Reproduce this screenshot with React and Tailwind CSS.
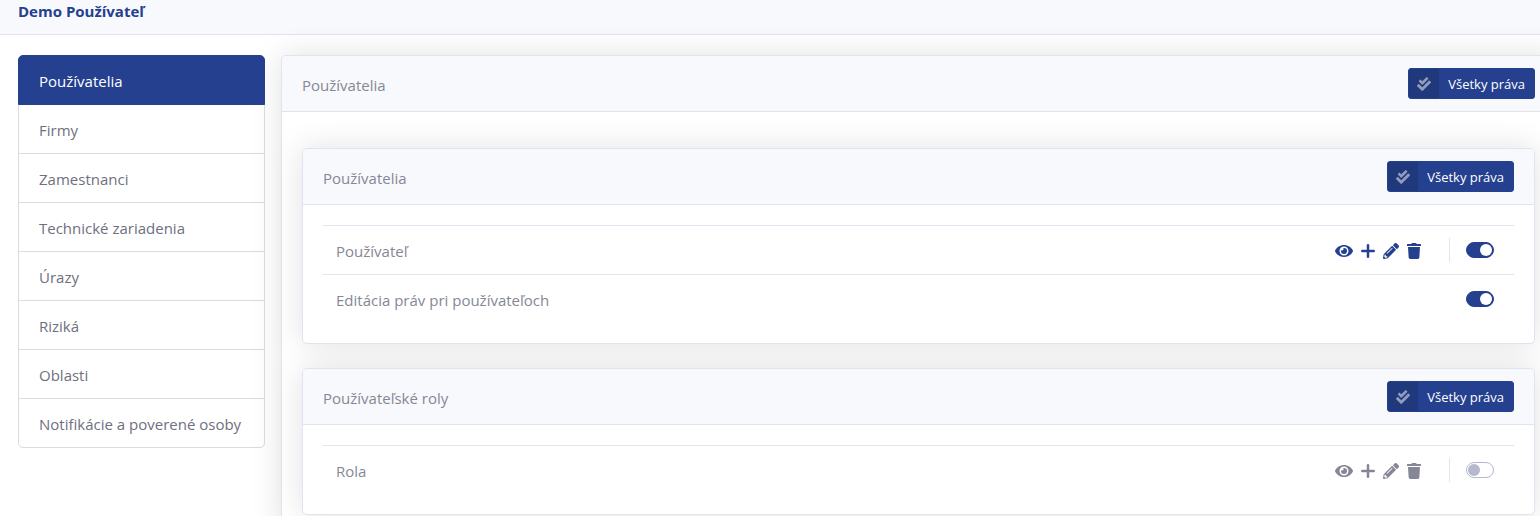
import React, { useState } from 'react'
import { FaCheckDouble, FaEye, FaPencilAlt, FaTrash } from 'react-icons/fa'

const sections = [
    'Používatelia',
    'Firmy',
    'Zamestnanci',
    'Technické zariadenia',
    'Úrazy',
    'Riziká',
    'Oblasti',
    'Notifikácie a poverené osoby',
]

const groups = [
    {
        title: 'Používatelia',
        rights: [
            { name: 'Používateľ', actions: true, enabled: true },
            {
                name: 'Editácia práv pri používateľoch',
                actions: false,
                enabled: true,
            },
        ],
    },
    {
        title: 'Používateľské roly',
        rights: [{ name: 'Rola', actions: true, enabled: false }],
    },
]

function PlusIcon({ className }) {
    return (
        <svg
            viewBox="0 0 14 16"
            className={className}
            fill="none"
            stroke="currentColor"
            strokeWidth="2.5"
            strokeLinecap="round"
        >
            <path d="M7 2.25v11.5M1.25 8h11.5" />
        </svg>
    )
}

const actions = [
    { label: 'Zobraziť', Icon: FaEye, size: 'w-[18px] h-4' },
    { label: 'Pridať', Icon: PlusIcon, size: 'w-[14px] h-4' },
    { label: 'Upraviť', Icon: FaPencilAlt, size: 'w-4 h-4' },
    { label: 'Zmazať', Icon: FaTrash, size: 'w-[14px] h-4' },
]

function AllRightsButton({ onClick }) {
    return (
        <button
            type="button"
            onClick={onClick}
            className="flex items-stretch h-[31px] rounded-[3px] border border-[#24408e] bg-[#24408e] text-[13px] text-white cursor-pointer"
        >
            <span className="flex items-center justify-center w-[30px] bg-[#20387c] text-[#929cbe]">
                <FaCheckDouble className="size-[14px]" />
            </span>
            <span className="self-center px-[9px]">Všetky práva</span>
        </button>
    )
}

function Card({ title, onAllRights, children }) {
    return (
        <section className="rounded-[5px] border border-[#e1e3f0] bg-white shadow-[0_0_32px_rgba(0,0,0,0.12)]">
            <header className="flex items-center justify-between h-14 px-5 rounded-t-[4px] border-b border-[#e1e3f0] bg-[#f8f9fd]">
                <h2 className="pt-0.5">{title}</h2>
                <AllRightsButton onClick={onAllRights} />
            </header>
            {children}
        </section>
    )
}

function RightRow({ right, enabled, onToggle }) {
    return (
        <tr className="h-[49px]">
            <th
                scope="row"
                className="pl-[13px] pt-0.5 border-t border-[#e1e3f0] text-left font-normal"
            >
                {right.name}
            </th>
            <td className="pr-5 border-t border-[#e1e3f0]">
                <div className="flex items-center justify-end">
                    {right.actions && (
                        <div
                            className={`flex items-center gap-2 h-6 pt-0.5 pr-7 mr-4 border-r border-[#e1e3f0] ${enabled ? 'text-[#24408e]' : 'text-[#868796]'}`}
                        >
                            {actions.map(({ label, Icon, size }) => (
                                <button
                                    key={label}
                                    type="button"
                                    aria-label={label}
                                    className="cursor-pointer"
                                >
                                    <Icon className={size} />
                                </button>
                            ))}
                        </div>
                    )}
                    <input
                        type="checkbox"
                        role="switch"
                        aria-label={right.name}
                        checked={enabled}
                        onChange={onToggle}
                        className="flex items-center appearance-none w-7 h-4 px-px rounded-full border border-[#b6b9ce] bg-white cursor-pointer before:size-3 before:rounded-full before:bg-[#b6b9ce] checked:justify-end checked:border-[#24408e] checked:bg-[#24408e] checked:before:bg-white"
                    />
                </div>
            </td>
        </tr>
    )
}

function App() {
    const [active, setActive] = useState(sections[0])
    const [enabled, setEnabled] = useState(() =>
        Object.fromEntries(
            groups.flatMap((g) => g.rights.map((r) => [r.name, r.enabled])),
        ),
    )

    const toggle = (name) => {
        setEnabled({ ...enabled, [name]: !enabled[name] })
    }
    const enableAll = (list) => {
        const next = { ...enabled }
        list.forEach((g) => g.rights.forEach((r) => (next[r.name] = true)))
        setEnabled(next)
    }

    return (
        <div className="h-screen overflow-hidden bg-white font-['Open_Sans',sans-serif] text-[15px] leading-6 text-[#868796]">
            <header className="px-[18px] pb-3 border-b border-[#e1e3f0] bg-[#f8f9fd]">
                <h1 className="font-bold leading-[22px] text-[#24408e]">
                    Demo Používateľ
                </h1>
            </header>
            <div className="flex items-start gap-4 pt-5 pl-[18px]">
                <nav className="shrink-0 min-w-[247px]">
                    {sections.map((name) => (
                        <a
                            key={name}
                            href="#"
                            onClick={() => setActive(name)}
                            className={`flex items-center h-[50px] px-5 pt-0.5 border not-first:-mt-px first:rounded-t-[5px] last:rounded-b-[5px] ${active === name ? 'relative border-[#24408e] bg-[#24408e] text-white' : 'border-[#dcdcdf] bg-white text-[#6e707e]'}`}
                        >
                            {name}
                        </a>
                    ))}
                </nav>
                {/* the panel runs past the right edge of the window */}
                <main className="grow -mr-4">
                    <Card
                        title={active}
                        onAllRights={() => enableAll(groups)}
                    >
                        <div className="flex flex-col gap-6 px-5 pt-9 pb-5">
                            {groups.map((group) => (
                                <Card
                                    key={group.title}
                                    title={group.title}
                                    onAllRights={() => enableAll([group])}
                                >
                                    <div className="p-5">
                                        <table className="w-full border-separate border-spacing-0">
                                            <tbody>
                                                {group.rights.map((right) => (
                                                    <RightRow
                                                        key={right.name}
                                                        right={right}
                                                        enabled={
                                                            enabled[right.name]
                                                        }
                                                        onToggle={() =>
                                                            toggle(right.name)
                                                        }
                                                    />
                                                ))}
                                            </tbody>
                                        </table>
                                    </div>
                                </Card>
                            ))}
                        </div>
                    </Card>
                </main>
            </div>
        </div>
    )
}

export default App
